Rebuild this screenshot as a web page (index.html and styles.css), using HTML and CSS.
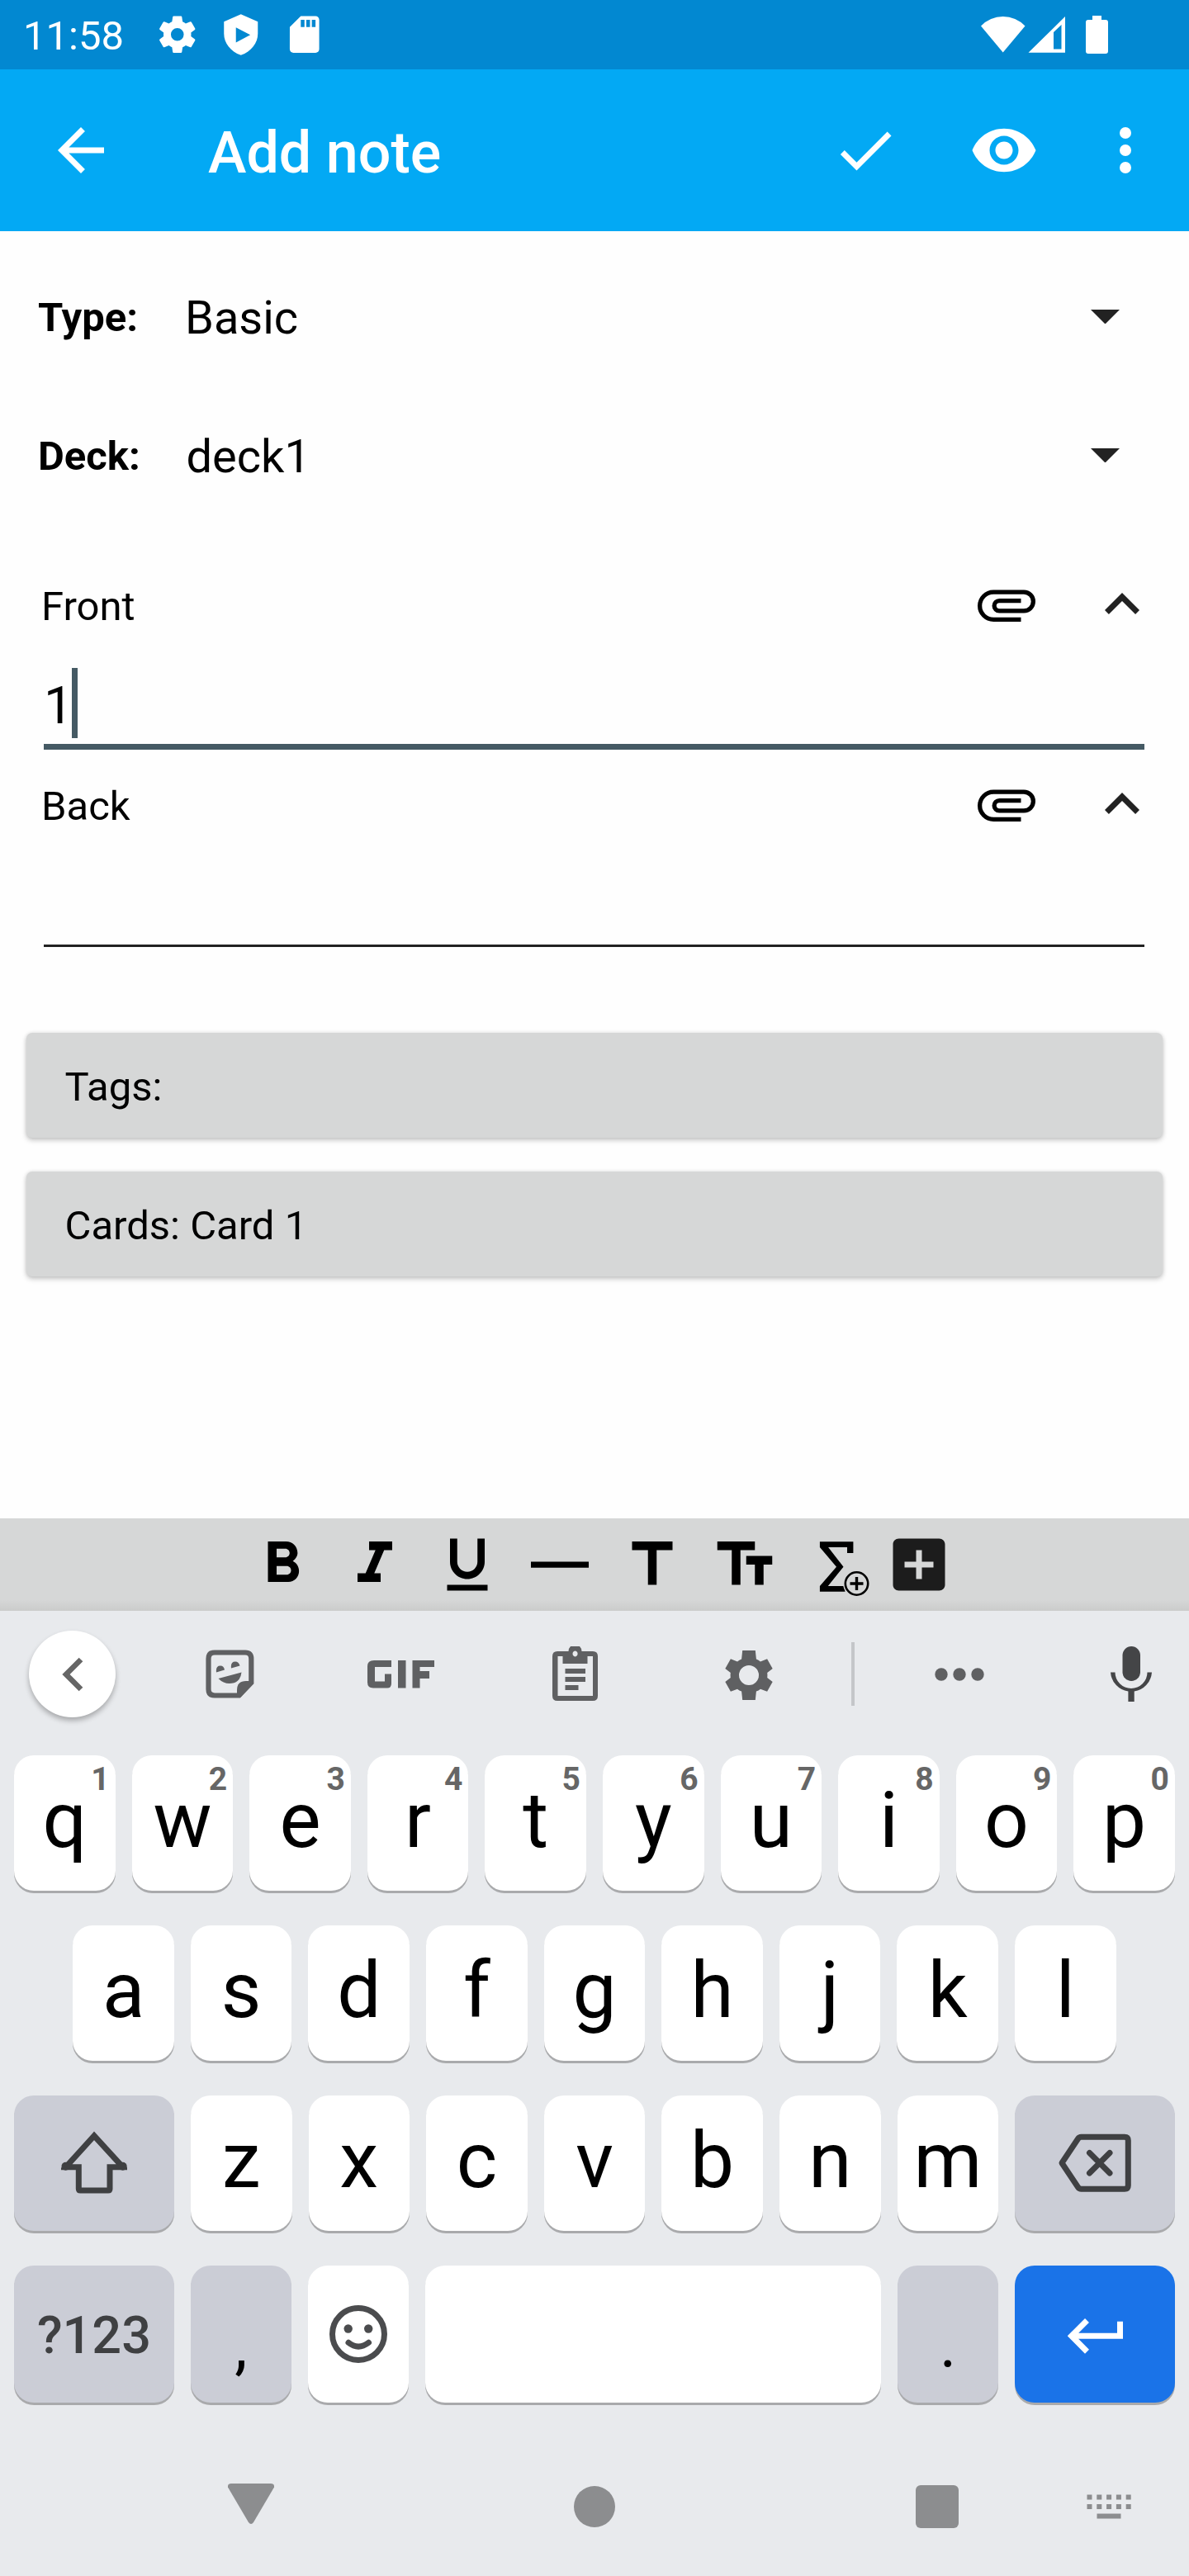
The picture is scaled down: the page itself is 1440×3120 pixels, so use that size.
FILE: index.html
```html
<!DOCTYPE html>
<html lang="en">
<head>
<meta charset="utf-8">
<title>Add note</title>
<link rel="stylesheet" href="styles.css">
</head>
<body>
<div class="screen">
  <header class="status">
    <span class="clock">11:58</span>
    <svg class="s-icon" viewBox="0 0 24 24"><path d="M19.43 12.98c.04-.32.07-.64.07-.98s-.03-.66-.07-.98l2.11-1.65c.19-.15.24-.42.12-.64l-2-3.46c-.12-.22-.39-.3-.61-.22l-2.49 1c-.52-.4-1.08-.73-1.69-.98l-.38-2.65C14.46 2.180 14.250 2 14 2h-4c-.25 0-.46.18-.49.42l-.38 2.65c-.61.25-1.17.59-1.69.98l-2.49-1c-.23-.09-.49 0-.61.22l-2 3.460c-.13.22-.07.49.12.64l2.110 1.650c-.04.32-.07.65-.07.98s.03.66.07.98l-2.110 1.650c-.19.15-.24.42-.12.64l2 3.460c.12.22.39.3.61.22l2.490-1c.52.4 1.080.73 1.690.98l.38 2.650c.03.24.24.42.49.42h4c.25 0 .46-.18.49-.42l.38-2.650c.61-.25 1.170-.59 1.690-.98l2.490 1c.23.09.49 0 .61-.22l2-3.460c.12-.22.07-.49-.12-.64zM12 15.500a3.500 3.500 0 1 1 0-7 3.500 3.500 0 0 1 0 7z"/></svg>
    <svg class="s-icon" viewBox="0 0 24 24"><path fill-rule="evenodd" d="M12 1L2.800 5v6.500c0 5 3.500 9.700 9.200 11.700 5.700-2 9.200-6.700 9.200-11.700V5zM9.300 8.200l7.800 4-7.800 4.200z"/></svg>
    <svg class="s-icon" viewBox="0 0 24 24"><path d="M18 2h-8L4.020 8 4 20c0 1.100.9 2 2 2h12c1.100 0 2-.9 2-2V4c0-1.100-.9-2-2-2zm-6 6h-2V4h2v4zm3 0h-2V4h2v4zm3 0h-2V4h2v4z"/></svg>
    <span class="grow"></span>
    <svg class="signals" viewBox="1188 16 156 52"><path d="M1188 31.500a37 37 0 0 1 53.500 0L1214.700 63.500z"/><path fill-rule="evenodd" d="M1290 20V63.700H1245.500zM1276 39V59.500H1285.500V30z"/><path d="M1323 19h11v5h5q3 0 3 3v35q0 3-3 3h-21q-3 0-3-3V27q0-3 3-3h5z"/></svg>
  </header>
  <div class="appbar">
    <svg class="icon" viewBox="0 0 24 24"><path d="M20 11H7.830l5.590-5.590L12 4l-8 8 8 8 1.410-1.410L7.830 13H20v-2z"/></svg>
    <h1 class="title">Add note</h1>
    <svg class="icon" viewBox="0 0 24 24"><path d="M9 16.200L4.800 12l-1.400 1.400L9 19 21 7l-1.400-1.400L9 16.200z"/></svg>
    <svg class="icon eye" viewBox="0 0 24 24"><path d="M12 4.500C7 4.500 2.730 7.610 1 12c1.730 4.390 6 7.500 11 7.500s9.270-3.110 11-7.500c-1.730-4.390-6-7.500-11-7.500zM12 17c-2.760 0-5-2.240-5-5s2.240-5 5-5 5 2.240 5 5-2.240 5-5 5zm0-8c-1.660 0-3 1.340-3 3s1.340 3 3 3 3-1.340 3-3-1.340-3-3-3z"/></svg>
    <svg class="icon more" viewBox="0 0 24 24"><circle cx="12" cy="6" r="2"/><circle cx="12" cy="12" r="2"/><circle cx="12" cy="18" r="2"/></svg>
  </div>
  <main class="editor">
    <div class="select"><span class="select-label">Type:</span><span class="select-value">Basic</span><svg class="caret" viewBox="0 0 10 5"><path d="M0 0h10L5 5z"/></svg></div>
    <div class="select"><span class="select-label">Deck:</span><span class="select-value deck">deck1</span><svg class="caret" viewBox="0 0 10 5"><path d="M0 0h10L5 5z"/></svg></div>

    <section class="field first">
      <div class="field-head"><span class="field-name">Front</span>
        <svg class="icon clip" viewBox="0 0 24 24"><path d="M17 17.250H7.500a4.750 4.750 0 0 1 0-9.500H18a3.250 3.250 0 0 1 0 6.500H9.500a1.750 1.750 0 0 1 0-3.500H17"/></svg>
        <svg class="icon collapse" viewBox="0 0 24 24"><path d="M12 8l-6 6 1.410 1.410L12 10.830l4.590 4.580L18 14z"/></svg>
      </div>
      <div class="input focused"><span class="value">1</span><span class="cursor"></span></div>
    </section>
    <section class="field">
      <div class="field-head"><span class="field-name">Back</span>
        <svg class="icon clip" viewBox="0 0 24 24"><path d="M17 17.250H7.500a4.750 4.750 0 0 1 0-9.500H18a3.250 3.250 0 0 1 0 6.500H9.500a1.750 1.750 0 0 1 0-3.500H17"/></svg>
        <svg class="icon collapse" viewBox="0 0 24 24"><path d="M12 8l-6 6 1.410 1.410L12 10.830l4.590 4.580L18 14z"/></svg>
      </div>
      <div class="input"></div>
    </section>
    <div class="buttons">
      <div class="button">Tags:</div>
      <div class="button">Cards: Card 1</div>
    </div>
  </main>

  <div class="format">
    <svg class="icon" viewBox="0 0 24 24"><path d="M15.600 10.790c.97-.67 1.650-1.770 1.650-2.790 0-2.260-1.750-4-4-4H7v14h7.040c2.090 0 3.710-1.700 3.710-3.790 0-1.520-.86-2.820-2.150-3.420zM10 6.500h3c.83 0 1.500.67 1.500 1.500s-.67 1.500-1.500 1.500h-3v-3zm3.500 9H10v-3h3.500c.83 0 1.500.67 1.500 1.500s-.67 1.500-1.500 1.500z"/></svg>
    <svg class="icon" viewBox="0 0 24 24"><path d="M10 4v3h2.210l-3.420 8H6v3h8v-3h-2.210l3.420-8H18V4z"/></svg>
    <svg class="icon" viewBox="0 0 24 24"><path d="M12 17c3.310 0 6-2.690 6-6V3h-2.500v8c0 1.930-1.570 3.500-3.500 3.500S8.500 12.930 8.500 11V3H6v8c0 3.310 2.690 6 6 6zm-7 2v2h14v-2H5z"/></svg>
    <svg class="icon" viewBox="0 0 24 24"><path d="M2 11h20v2.100H2z"/></svg>
    <svg class="icon" viewBox="0 0 24 24"><path d="M5 4v3h5.500v12h3V7H19V4z"/></svg>
    <svg class="icon" viewBox="0 0 24 24"><path d="M2.500 4v3h5v12h3V7h5V4h-13zm19 5h-9v3h3v7h3v-7h3V9z"/></svg>
    <svg class="icon" viewBox="971.500 1853 84 84"><path d="M992.400 1867.300h40.500V1881H1025.500V1874H1002.600L1021 1897.700 1002.300 1921H1023V1927.700H992.400V1921L1012.500 1897.700 992.400 1874z"/><circle cx="1037" cy="1918" r="16.500" fill="#d6d7d7"/><circle cx="1037" cy="1918" r="13.700" fill="none" stroke="#000" stroke-width="2.600"/><path d="M1029 1918h16M1037 1910v16" stroke="#000" stroke-width="3.400"/></svg>
    <svg class="icon add" viewBox="0 0 24 24"><path d="M19 3H5c-1.110 0-2 .9-2 2v14c0 1.100.89 2 2 2h14c1.100 0 2-.9 2-2V5c0-1.100-.9-2-2-2zm-2 10h-4v4h-2v-4H7v-2h4V7h2v4h4v2z"/></svg>
  </div>

  <div class="keyboard">
    <div class="strip">
      <span class="back"><svg viewBox="0 0 26 42" width="26" height="42"><path d="M23 3L5 21l18 18" fill="none" stroke="#666" stroke-width="6.600"/></svg></span>
      <svg class="tool sticker" viewBox="249 1998 59 59"><path d="M297 2001.500H260q-7.500 0-7.500 7.500v37q0 7.500 7.500 7.500h29.500L304.300 2038V2009q0-7.500-7.300-7.500z" fill="none" stroke="#5f6062" stroke-width="6.200"/><path d="M287 2055V2047q0-11 11-11H307V2039L291 2056z"/><path d="M262 2025.500q-1-8 5-8 4 0 5 5zM280 2020.500q-1-8 5-8 4 0 5.500 5zM264.500 2033L292.500 2025.500q-1 10-9 12.800-11 3-19-5.300z"/></svg>
      <svg class="tool gif" viewBox="445 2010 82 34"><path d="M453 2010H474v8H454v17.500H466V2026.500h8V2038q0 5.500-5 5.500H452q-7 0-7-7V2017q0-7 8-7zM482 2010h9.500v33.500H482zM499.500 2010H526v8H508.500v5H520v9H508.500v11.500h-9z"/></svg>
      <svg class="tool board" viewBox="669 1994 55 67"><path fill-rule="evenodd" d="M675 2000H688.500a8 8 0 0 1 16 0H718q6 0 6 6v48q0 6-6 6H675q-6 0-6-6V2006q0-6 6-6zM696.500 1999.500a3 3.500 0 1 0 .1 0zM675.500 2006V2054H718V2006H711.500V2015H681.500V2006z"/><path d="M684.500 2021H709v6H684.500zM684.500 2031H709v6H684.500zM684.500 2041h16v6h-16z"/></svg>
      <svg class="tool gear" viewBox="2 2 20 20"><path fill-rule="evenodd" d="M19.400 13c.04-.32.07-.64.07-.98s-.03-.66-.07-.98l2.160-1.700-2.200-3.900-2.700 1.050c-.52-.4-1.080-.73-1.690-.98L14.600 2h-5.200L9.030 5.510c-.61.25-1.170.59-1.690.98l-2.700-1.050-2.200 3.900 2.160 1.700c-.04.32-.07.65-.07.98s.03.66.07.98l-2.160 1.700 2.200 3.900 2.700-1.050c.52.4 1.080.73 1.690.98L9.400 22h5.200l.37-3.470c.61-.25 1.170-.59 1.690-.98l2.700 1.050 2.200-3.900zM12 16a4 4 0 1 1 0-8 4 4 0 0 1 0 8z"/></svg>
      <span class="divider"></span>
      <svg class="tool dots" viewBox="0 0 60 16"><circle cx="8" cy="8" r="7.700"/><circle cx="30" cy="8" r="7.700"/><circle cx="52" cy="8" r="7.700"/></svg>
      <svg class="tool mic" viewBox="1345 1993 50 67"><rect x="1359.500" y="1993" width="21.500" height="42" rx="10.750"/><path d="M1345 2024.500h5.500a19.500 19.500 0 0 0 39 0h5.500a25 25 0 0 1-21.300 23V2060h-7.300V2047.500a25 25 0 0 1-21.400-23z"/></svg>
    </div>
    <div class="keys">
      <div class="krow">
        <div class="key">q<sup>1</sup></div><div class="key">w<sup>2</sup></div><div class="key">e<sup>3</sup></div><div class="key">r<sup>4</sup></div><div class="key">t<sup>5</sup></div><div class="key">y<sup>6</sup></div><div class="key">u<sup>7</sup></div><div class="key">i<sup>8</sup></div><div class="key">o<sup>9</sup></div><div class="key">p<sup>0</sup></div>
      </div>
      <div class="krow inset">
        <div class="key">a</div><div class="key">s</div><div class="key">d</div><div class="key">f</div><div class="key">g</div><div class="key">h</div><div class="key">j</div><div class="key">k</div><div class="key">l</div>
      </div>
      <div class="krow">
        <div class="key wide dim"><svg width="80" height="78" viewBox="73 2581 80 78"><path d="M113 2586.800L78.500 2624.800H94.300V2651q0 2 2 2H130q2 0 2-2V2624.800H147.800z" fill="none" stroke="#3f4042" stroke-width="7"/><circle cx="78.500" cy="2623.700" r="5" fill="#3f4042"/><circle cx="147.700" cy="2623.700" r="5" fill="#3f4042"/></svg></div>
        <div class="key">z</div><div class="key">x</div><div class="key">c</div><div class="key">v</div><div class="key">b</div><div class="key">n</div><div class="key">m</div>
        <div class="key wide dim"><svg width="90" height="72" viewBox="1279 2588 90 72"><path d="M1284 2623.700L1303.500 2594.500Q1305 2592.300 1307.500 2592.300H1360Q1364.300 2592.300 1364.300 2596.500V2651Q1364.300 2655.200 1360 2655.200H1307.500Q1305 2655.200 1303.500 2653zM1317.500 2611.500L1342 2636M1342 2611.500L1317.500 2636" fill="none" stroke="#3f4042" stroke-width="7" stroke-linecap="round" stroke-linejoin="round"/></svg></div>
      </div>
      <div class="krow last">
        <div class="key wide dim mode">?123</div><div class="key dim punct">,</div>
        <div class="key"><svg width="70" height="70" viewBox="0 0 70 70"><circle cx="35" cy="35" r="31.500" fill="none" stroke="#4b4c4e" stroke-width="7"/><circle cx="22.700" cy="28.500" r="5.200" fill="#4b4c4e"/><circle cx="47.200" cy="28.500" r="5.200" fill="#4b4c4e"/><path d="M23 45.300q12 9.500 24.500 0" fill="none" stroke="#4b4c4e" stroke-width="7" stroke-linecap="round"/></svg></div>
        <div class="key space"></div><div class="key dim punct">.</div>
        <div class="key wide enter"><svg width="67" height="44" viewBox="1290 2809 67 44"><path d="M1313.500 2811.500L1294.700 2830.300 1313.500 2849.200M1296 2830.300H1353.500V2812.700" fill="none" stroke="#fff" stroke-width="7"/></svg></div>
      </div>
    </div>
    <nav class="navbar">
      <svg class="nav-down" viewBox="276 3008 56 50"><path d="M280 3008H328q4.500 0 4 4.500L307 3055q-3 4-6 0L276 3012.500q-.5-4.500 4-4.500z"/></svg>
      <span class="nav-home"></span>
      <span class="nav-recent"></span>
      <svg class="nav-kbd" viewBox="1316 3021 55 30"><path d="M1316.500 3024.500h54M1316.500 3036h54" stroke="#8c8d8f" stroke-width="6" stroke-dasharray="6 5.800"/><path d="M1328.500 3044.500h29v6h-29z"/></svg>
    </nav>
  </div>
</div>
</body>
</html>
```
FILE: styles.css
```css
* { box-sizing: border-box; }
body { margin: 0; font-family: Roboto, "Liberation Sans", sans-serif; color: #000; }
svg { display: block; flex: none; }
.screen { width: 1440px; height: 3120px; display: flex; flex-direction: column; background: #fefefe; overflow: hidden; }
.icon { width: 84px; height: 84px; }
.grow { flex: 1; }

.status { height: 84px; flex: none; display: flex; align-items: center; padding: 0 96px 0 28px; background: #0288d1; fill: #fff; color: #fff; }
.clock { width: 160px; font-size: 49px; line-height: 56px; padding-top: 4px; }
.s-icon { width: 53.500px; height: 53.500px; margin-right: 23.500px; }
.signals { width: 156px; height: 52px; }

.appbar { height: 196px; flex: none; display: flex; align-items: center; padding: 0 35px 0 56px; background: #03a9f4; fill: #fff; color: #fff; }
.title { flex: 1; margin: 0 0 0 112px; padding-top: 6px; font-size: 70px; line-height: 82px; font-weight: 500; }
.eye { margin-left: 84px; }
.more { margin-left: 63px; }

.editor { height: 1559px; flex: none; padding-top: 20.500px; }
.select { height: 168px; display: flex; align-items: center; padding: 0 84.500px 0 46px; }
.select-label { width: 178px; font-size: 49px; font-weight: 700; }
.select-value { flex: 1; font-size: 56px; }
.deck { padding-left: 1.500px; }
.caret { width: 35px; height: 17.500px; fill: #222; margin-top: -2px; }

.field { margin: 23.500px 39px 0 50px; }
.field.first { margin-top: 53px; }
.field-head { height: 84px; display: flex; align-items: center; }
.field-name { flex: 1; font-size: 49px; padding-top: 6px; }
.clip { margin-right: 56px; fill: none; stroke: #000; stroke-width: 1.500; }
.collapse { fill: #222; }
.input { height: 131px; margin: 0 15px 0 3px; padding-top: 35.500px; display: flex; border-bottom: 3.500px solid #222; }
.input.focused { height: 134.500px; border-bottom: 7px solid #455a64; }
.value { font-size: 63px; line-height: 91px; height: 85px; }
.cursor { width: 7px; height: 85px; background: #455a64; margin-left: -1px; }

.buttons { display: grid; gap: 41.500px; margin: 104.500px 32px 0; }
.button { height: 126.500px; padding-left: 46.500px; border-radius: 7px; background: #d6d7d7; font-size: 49px; line-height: 132px; box-shadow: 0 3px 6px rgba(0,0,0,.22), 0 0 4px rgba(0,0,0,.1); }

.format { height: 112px; flex: none; display: flex; gap: 28px; padding: 13.500px 0 0 299.500px; background: linear-gradient(#d6d7d7 88%, #cbcccb); }
.add { fill: #1c1c1c; margin-left: -13px; }

.keyboard { flex: 1; background: #e8eaed; }
.strip { height: 175px; display: flex; align-items: center; padding: 0 45px 22px 35px; }
.back { width: 105px; height: 105px; flex: none; border-radius: 50%; background: #fff; display: flex; align-items: center; justify-content: center; box-shadow: 0 4px 6px rgba(0,0,0,.28); }
.tool { fill: #5f6062; }
.sticker { width: 59px; height: 59px; margin-left: 109px; }
.gif { width: 82px; height: 34px; margin-left: 137px; }
.board { width: 55px; height: 67px; margin-left: 142px; }
.gear { width: 60px; height: 60px; margin: 3px 0 0 152.500px; }
.divider { width: 4px; height: 77px; background: #c4c6c9; margin-left: 94.500px; }
.dots { width: 60px; height: 16px; margin-left: 96.500px; }
.mic { width: 50px; height: 67px; margin-left: 153.500px; fill: #444547; }

.keys { display: grid; gap: 42px; padding: 0 17px; }
.krow { height: 164px; display: flex; gap: 20px; }
.krow.inset { padding: 0 71.300px; }
.krow.last { height: 166px; }
.key { position: relative; flex: 1 1 0; display: flex; align-items: center; justify-content: center; border-radius: 24px; background: #fff; box-shadow: 0 3px 0 #a9aaac; font-size: 94.500px; line-height: 157px; padding-bottom: 7px; }
.key > svg { margin-top: 7px; }
.key sup { position: absolute; right: 7px; top: 6px; font-size: 39px; line-height: 46px; font-weight: 700; color: #666; }
.key.dim { background: #cbcdd6; }
.key.wide { flex: 0 0 193.900px; }
.key.space { flex: 0 0 552px; }
.key.mode { font-size: 63px; font-weight: 500; color: #3f4042; padding: 3px 0 0; }
.key.punct { font-size: 77px; padding: 28px 0 0; }
.key.enter { background: #1a73e8; }
.enter > svg { margin-top: 13px; }

.navbar { display: flex; align-items: center; height: 122px; margin-top: 65px; padding-left: 276px; fill: #8c8d8f; }
.nav-down { width: 56px; height: 50px; margin-top: -6px; }
.nav-home { width: 50px; height: 50px; border-radius: 50%; background: #8c8d8f; margin-left: 363px; }
.nav-recent { width: 52px; height: 52px; border-radius: 6px; background: #8c8d8f; margin-left: 364px; }
.nav-kbd { width: 55px; height: 30px; margin-left: 155px; }
```
